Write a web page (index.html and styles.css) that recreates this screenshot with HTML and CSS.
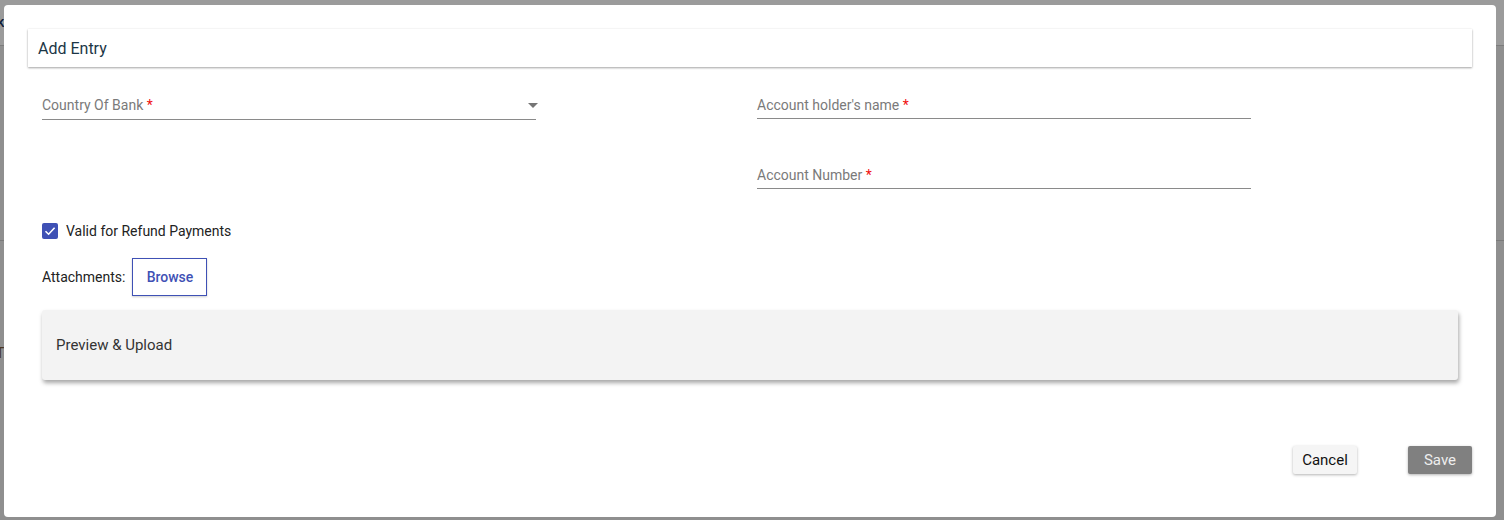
FILE: index.html
```html
<!DOCTYPE html>
<html>
<head>
<meta charset="utf-8">
<link rel="stylesheet" href="styles.css">
</head>
<body>
<div class="backdrop">
  <div class="bg-top"><span class="bg-letter">k</span></div>
  <div class="bg-mid"></div>
  <div class="bg-low"><span class="bg-glyph">T</span></div>
</div>
<div class="dialog">
  <div class="dialog-header">Add Entry</div>
  <div class="form">
    <div class="grid">
      <div class="field select-field">
        <span class="label">Country Of Bank <span class="req">*</span></span>
        <svg class="arrow" width="10" height="5" viewBox="0 0 10 5"><path d="M0 0 L10 0 L5 5 Z" fill="#757575"/></svg>
      </div>
      <div class="field">
        <span class="label">Account holder's name <span class="req">*</span></span>
      </div>
      <div class="spacer"></div>
      <div class="field row2">
        <span class="label">Account Number <span class="req">*</span></span>
      </div>
    </div>
    <div class="check-row">
      <span class="checkbox">
        <svg width="16" height="16" viewBox="0 0 16 16"><path d="M3.5 8.2 L6.6 11.2 L12.6 4.8" fill="none" stroke="#fff" stroke-width="1.6"/></svg>
      </span>
      <span class="check-label">Valid for Refund Payments</span>
    </div>
    <div class="attach-row">
      <span class="attach-label">Attachments:</span>
      <button class="browse">Browse</button>
    </div>
    <div class="preview">Preview &amp; Upload</div>
  </div>
  <div class="actions">
    <button class="btn cancel">Cancel</button>
    <button class="btn save">Save</button>
  </div>
</div>
</body>
</html>
```
FILE: styles.css
```css
html, body {
  margin: 0;
  padding: 0;
  width: 1504px;
  height: 520px;
  overflow: hidden;
  font-family: Roboto, "Liberation Sans", sans-serif;
}
body {
  position: relative;
  background: #8f8f8f;
}
.backdrop {
  display: flex;
  flex-direction: column;
  height: 520px;
}
.bg-top {
  height: 45px;
  background: #9b9b9b;
  border-bottom: 1px solid #7c7c7c;
  position: relative;
}
.bg-letter {
  position: absolute;
  left: -3px;
  top: 14px;
  font-size: 14px;
  font-weight: 500;
  color: #0f1e3a;
}
.bg-mid {
  height: 194px;
  background: #8f8f8f;
  border-bottom: 1px solid #7a7a7a;
}
.bg-low {
  flex: 1;
  background: #8f8f8f;
  position: relative;
}
.bg-glyph {
  position: absolute;
  left: -4px;
  top: 104px;
  font-size: 14px;
  color: #4a3520;
}
.dialog {
  position: absolute;
  left: 4px;
  top: 5px;
  width: 1492px;
  height: 512px;
  background: #fff;
  border-radius: 4px;
  box-sizing: border-box;
  padding: 24px 24px 0 24px;
  display: flex;
  flex-direction: column;
}
.dialog-header {
  height: 38px;
  box-sizing: border-box;
  padding-left: 10px;
  display: flex;
  align-items: center;
  font-size: 16px;
  color: #1b3646;
  background: #fff;
  box-shadow: 0 1px 2px rgba(0,0,0,0.35), 0 0 2px rgba(0,0,0,0.06);
}
.form {
  padding: 28px 0 0 14px;
}
.grid {
  display: grid;
  grid-template-columns: 494px 494px;
  column-gap: 221px;
  row-gap: 45px;
}
.field {
  position: relative;
  height: 23px;
  border-bottom: 1px solid #8a8a8a;
  padding-bottom: 0;
}
.select-field {
  height: 24px;
}
.label {
  display: block;
  font-size: 14px;
  line-height: 20px;
  color: #7a7a7a;
}
.req {
  color: #f01010;
}
.arrow {
  position: absolute;
  right: -2px;
  top: 8px;
}
.check-row {
  display: flex;
  align-items: center;
  margin-top: 33px;
  height: 17px;
}
.checkbox {
  width: 16px;
  height: 16px;
  background: #3f51b5;
  border-radius: 2px;
  display: flex;
}
.check-label {
  margin-left: 8px;
  font-size: 14px;
  color: #222;
}
.attach-row {
  display: flex;
  align-items: center;
  margin-top: 19px;
}
.attach-label {
  font-size: 14px;
  color: #222;
}
.browse {
  margin-left: 7px;
  width: 75px;
  height: 38px;
  background: #fff;
  border: 1px solid #3f51b5;
  border-radius: 0;
  color: #3f51b5;
  font-family: Roboto, "Liberation Sans", sans-serif;
  font-size: 14px;
  font-weight: 500;
  box-shadow: 0 1px 2px rgba(0,0,0,0.2);
  padding: 0;
}
.preview {
  margin-top: 14px;
  width: 1416px;
  height: 70px;
  box-sizing: border-box;
  background: #f3f3f3;
  border-radius: 3px;
  padding-left: 14px;
  display: flex;
  align-items: center;
  font-size: 15px;
  color: #333;
  box-shadow: 1px 3px 4px rgba(0,0,0,0.35);
}
.actions {
  display: flex;
  justify-content: flex-end;
  gap: 51px;
  margin-top: 66px;
}
.btn {
  height: 28px;
  width: 64px;
  border: none;
  border-radius: 2px;
  font-family: Roboto, "Liberation Sans", sans-serif;
  font-size: 15px;
  padding: 0;
  box-shadow: 0 1px 3px rgba(0,0,0,0.3);
}
.cancel {
  background: #f5f5f5;
  color: #111;
}
.save {
  background: #808080;
  color: #eee;
}
```
